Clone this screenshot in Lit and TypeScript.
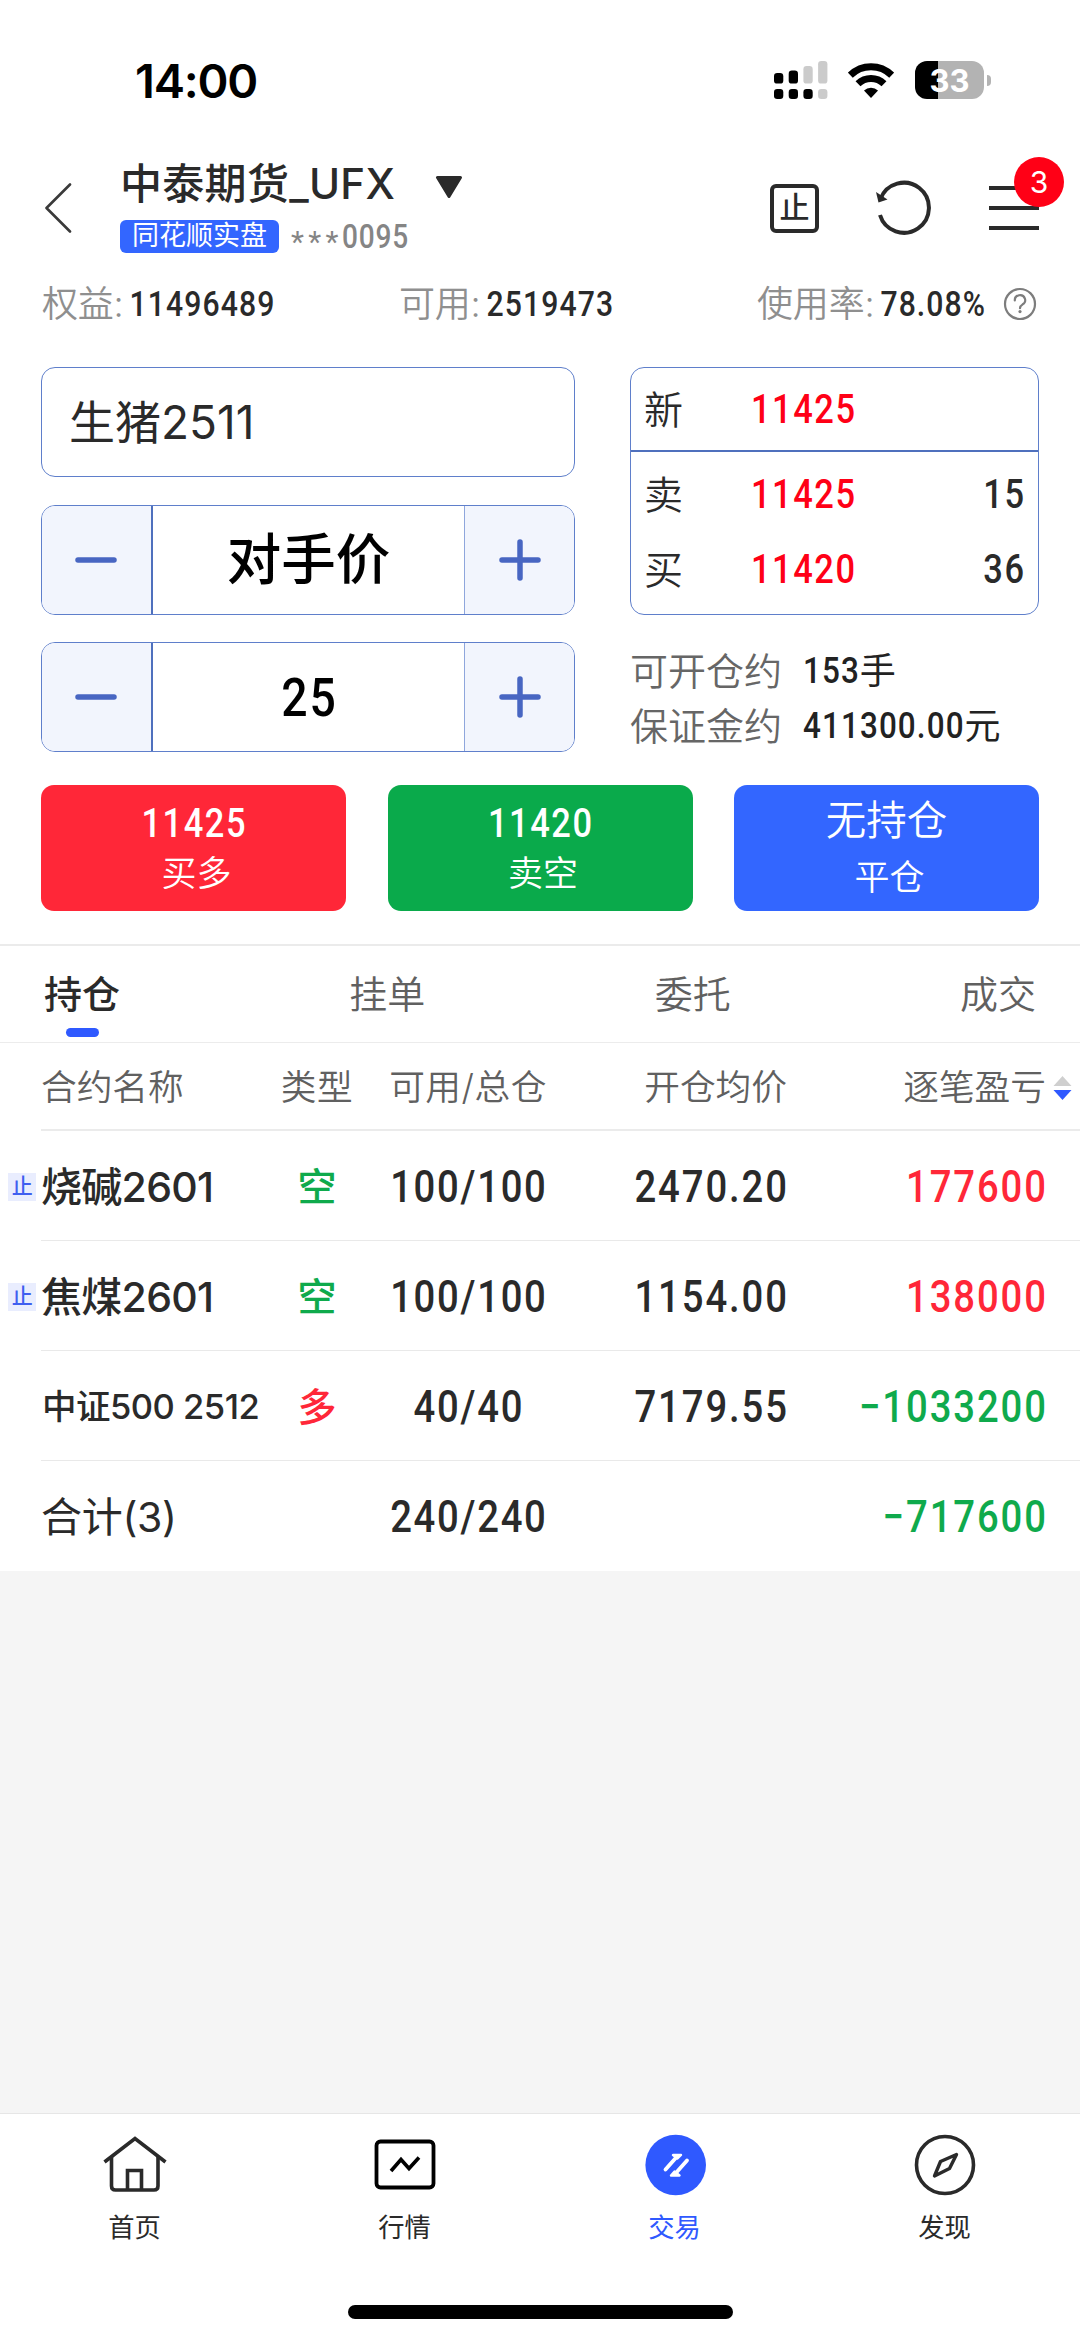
import { LitElement, html, css, svg, nothing } from "lit";
import { customElement, property } from "lit/decorators.js";
import { classMap } from "lit/directives/class-map.js";

const base = css`
  :host {
    display: block;
    font-family: Inter, "Noto Sans CJK SC", sans-serif;
    color: #2a2a2a;
  }
  * {
    box-sizing: border-box;
  }
  svg {
    display: block;
    flex: none;
  }
`;

/** Narrow numeral: set smaller, then stretched vertically to the full size. */
@customElement("num-text")
class NumText extends LitElement {
  @property() value = "";
  static styles = css`
    :host {
      display: inline-block;
      vertical-align: top;
      font-family: Roboto, "Noto Sans CJK SC", sans-serif;
      font-weight: 500;
      line-height: 1;
      white-space: nowrap;
    }
    .t {
      display: block;
      font-size: 0.85em;
      line-height: 1.1765;
      letter-spacing: var(--num-gap, 0.045em);
      margin-right: calc(-1 * var(--num-gap, 0.045em));
      transform: scaleY(1.1765);
    }
  `;
  render() {
    return html`<span class="t">${this.value}</span>`;
  }
}

@customElement("status-bar")
class StatusBar extends LitElement {
  static styles = [
    base,
    css`
      .bar {
        height: 162px;
        padding: 0 89px 0 135px;
        display: flex;
        align-items: center;
        justify-content: space-between;
      }
      .time {
        font-size: 47px;
        font-weight: 600;
        line-height: 1;
        letter-spacing: -1.2px;
        color: #000;
        margin-top: -2px;
      }
      .right {
        display: flex;
        align-items: center;
        margin-top: -2px;
      }
      .wifi {
        margin: 0 21px 0 20px;
      }
      .battery {
        display: flex;
        align-items: center;
        gap: 3px;
      }
      .cell {
        width: 69px;
        height: 38px;
        border-radius: 12px;
        background: linear-gradient(90deg, #000 23px, #b3b3b3 23px);
        color: #fff;
        font-size: 31px;
        font-weight: 700;
        line-height: 39px;
        text-align: center;
      }
      .nub {
        width: 4px;
        height: 11px;
        border-radius: 0 5px 5px 0;
        background: #b3b3b3;
      }
    `,
  ];
  render() {
    const cols = [12, 9.5, 5, 0];
    return html`<div class="bar">
      <div class="time">14:00</div>
      <div class="right">
        <svg width="54" height="38" viewBox="0 0 54 38">
          ${cols.map(
            (y, i) => svg`
              <rect x=${i * 14.7} y=${y} width="9.3" height=${22.6 - y} rx="3.2" fill=${i < 2 ? "#000" : "#cbcbcb"}></rect>
              <rect x=${i * 14.7} y="28" width="9.3" height="10" rx="3.2" fill=${i < 3 ? "#000" : "#cbcbcb"}></rect>`
          )}
        </svg>
        <svg class="wifi" width="46" height="35" viewBox="0 0 46 35">
          <g fill="none" stroke="#000" stroke-width="7">
            <path d="M2.3 12.2a29.5 29.5 0 0 1 41.4 0"></path>
            <path d="M10 20.8a18.6 18.6 0 0 1 26 0"></path>
          </g>
          <path d="M23 35l-7-7.4a10.3 10.3 0 0 1 14 0z" fill="#000"></path>
        </svg>
        <div class="battery"><div class="cell">33</div><div class="nub"></div></div>
      </div>
    </div>`;
  }
}

@customElement("account-header")
class AccountHeader extends LitElement {
  static styles = [
    base,
    css`
      .head {
        height: 92px;
        padding: 0 41px 0 44px;
        display: flex;
        align-items: center;
      }
      .who {
        margin-left: 48px;
        display: flex;
        flex-direction: column;
        gap: 12px;
      }
      .title {
        display: flex;
        align-items: center;
        height: 44px;
        margin-top: -3px;
        padding-bottom: 3px;
        font-size: 42px;
        font-weight: 500;
        line-height: 44px;
        letter-spacing: 0.300px;
      }
      .title svg {
        margin: 5px 0 0 40px;
      }
      .sub {
        display: flex;
        align-items: center;
        height: 33px;
        margin-bottom: -3px;
        gap: 12px;
      }
      .tag {
        width: 159px;
        height: 33px;
        border-radius: 6px;
        background: #3366ff;
        color: #fff;
        font-size: 27px;
        line-height: 32px;
        text-align: center;
      }
      .acct {
        display: flex;
        align-items: center;
        color: #858585;
      }
      .mask {
        font-family: Roboto, sans-serif;
        font-size: 30px;
        line-height: 33px;
        letter-spacing: 4.300px;
        padding-top: 5px;
        height: 33px;
        width: 51px;
      }
      .acct num-text {
        font-size: 33px;
        --num-gap: 0.030em;
      }
      .icons {
        margin-left: auto;
        display: flex;
        align-items: center;
      }
      .stop {
        width: 49px;
        height: 49px;
        border: 4px solid #2a2a2a;
        border-radius: 6px;
        font-size: 30px;
        line-height: 39px;
        text-align: center;
        font-weight: 500;
      }
      .redo {
        margin: 0 58px 0 56px;
      }
      .menu {
        position: relative;
      }
      .badge {
        position: absolute;
        left: 25px;
        top: -26px;
        width: 50px;
        height: 50px;
        border-radius: 50%;
        background: #ff0016;
        color: #fff;
        font-size: 30px;
        line-height: 51px;
        text-align: center;
      }
    `,
  ];
  render() {
    return html`<div class="head">
      <svg width="28" height="50" viewBox="0 0 28 50">
        <path d="M26 1.5L2.5 25 26 48.5" fill="none" stroke="#3a3a3a" stroke-width="2.6" stroke-linecap="round" stroke-linejoin="round"></path>
      </svg>
      <div class="who">
        <div class="title">
          <span>中泰期货_UFX</span>
          <svg width="28" height="22" viewBox="0 0 28 22">
            <path d="M2.5 1.5h23L14 20.5z" fill="#2a2a2a" stroke="#2a2a2a" stroke-width="3" stroke-linejoin="round"></path>
          </svg>
        </div>
        <div class="sub">
          <span class="tag">同花顺实盘</span>
          <span class="acct"><span class="mask">***</span><num-text value="0095"></num-text></span>
        </div>
      </div>
      <div class="icons">
        <div class="stop">止</div>
        <svg class="redo" width="56" height="56" viewBox="0 0 56 56">
          <path d="M5 19A25 25 0 1 1 4.5 35" fill="none" stroke="#2a2a2a" stroke-width="4" transform="translate(.5 0)"></path>
          <path d="M1 12l11.5 7.5L3.5 22.5z" fill="#2a2a2a"></path>
        </svg>
        <div class="menu">
          <svg width="50" height="50" viewBox="0 0 50 50">
            <path d="M0 5h50M0 25h50M0 45h50" stroke="#2a2a2a" stroke-width="4"></path>
          </svg>
          <span class="badge">3</span>
        </div>
      </div>
    </div>`;
  }
}

@customElement("fund-stats")
class FundStats extends LitElement {
  static styles = [
    base,
    css`
      .stats {
        height: 100px;
        padding: 0 43px 0 42px;
        display: grid;
        grid-template-columns: 357px 1fr auto;
        align-items: center;
      }
      .stat {
        display: flex;
        align-items: center;
        line-height: 1;
      }
      .label {
        font-size: 36px;
        font-weight: 350;
        color: #8f8f8f;
        margin-right: 6px;
        letter-spacing: -0.2px;
      }
      .n {
        font-size: 35.500px;
        --num-gap: 0.036em;
      }
      .stat svg {
        margin-left: 18px;
      }
    `,
  ];
  render() {
    return html`<div class="stats">
      <div class="stat"><span class="label">权益:</span><num-text class="n" value="11496489"></num-text></div>
      <div class="stat"><span class="label">可用:</span><num-text class="n" value="2519473"></num-text></div>
      <div class="stat">
        <span class="label">使用率:</span><num-text class="n" value="78.08%"></num-text>
        <svg width="34" height="34" viewBox="0 0 34 34" fill="none" stroke="#7d7d7d" stroke-width="2.2">
          <circle cx="17" cy="17" r="15"></circle>
          <path d="M11.8 13.4a5.2 5 0 1 1 7.6 4.2c-1.700 1-2.400 1.800-2.400 3.600" stroke-linecap="round"></path>
          <circle cx="17" cy="24.600" r="1.600" fill="#7d7d7d" stroke="none"></circle>
        </svg>
      </div>
    </div>`;
  }
}

@customElement("step-field")
class StepField extends LitElement {
  @property() value = "";
  @property({ type: Boolean }) numeric = false;
  static styles = [
    base,
    css`
      .box {
        height: 110px;
        border: 1.5px solid #5f7fcb;
        border-radius: 14px;
        display: grid;
        grid-template-columns: 111px 1fr 110px;
        overflow: hidden;
      }
      .btn {
        background: #f2f5fd;
        display: grid;
        place-items: center;
      }
      .minus {
        border-right: 2px solid #4f70bd;
        padding-right: 2px;
      }
      .plus {
        border-left: 1px solid #8fa6dc;
      }
      .val {
        display: grid;
        place-items: center;
        color: #000;
        font-size: 54.500px;
        font-weight: 500;
        line-height: 1;
      }
    `,
  ];
  render() {
    return html`<div class="box">
      <div class="btn minus">
        <svg width="42" height="42" viewBox="0 0 42 42"><path d="M3 21h36" stroke="#4866c2" stroke-width="5.500" stroke-linecap="round"></path></svg>
      </div>
      <div class="val">${this.numeric ? html`<num-text value=${this.value}></num-text>` : html`<span>${this.value}</span>`}</div>
      <div class="btn plus">
        <svg width="42" height="42" viewBox="0 0 42 42"><path d="M3 21h36M21 3v36" stroke="#4866c2" stroke-width="5.500" stroke-linecap="round"></path></svg>
      </div>
    </div>`;
  }
}

@customElement("order-form")
class OrderForm extends LitElement {
  static styles = [
    base,
    css`
      .form {
        padding: 13px 41px 32px;
        display: grid;
        grid-template-columns: 534px 409px;
        justify-content: space-between;
      }
      .left {
        display: flex;
        flex-direction: column;
        gap: 27.500px;
      }
      .contract {
        height: 110px;
        border: 1.5px solid #5f7fcb;
        border-radius: 14px;
        padding-left: 27px;
        font-size: 46px;
        font-weight: 400;
        line-height: 108px;
      }
      .quotes {
        height: 248px;
        border: 1.5px solid #5f7fcb;
        border-radius: 14px;
      }
      .q {
        display: grid;
        grid-template-columns: 107px 1fr auto;
        align-items: center;
        padding: 0 14px 0 13px;
        height: 75px;
        font-size: 39px;
        font-weight: 350;
        line-height: 1;
      }
      .last {
        height: 84px;
        border-bottom: 2px solid #4f70bd;
        margin-bottom: 5px;
      }
      .q num-text {
        font-size: 40.500px;
      }
      .px {
        color: #ff0016;
      }
      .est {
        display: flex;
        align-items: center;
        height: 55px;
        font-size: 38px;
        font-weight: 350;
        line-height: 1;
        color: #666;
      }
      .ests {
        padding-top: 28px;
      }
      .est num-text {
        font-size: 37px;
        color: #222;
        margin-left: 21px;
        --num-gap: 0.035em;
      }
      .unit {
        font-size: 36px;
        font-weight: 400;
        color: #222;
        margin-left: 1px;
      }
    `,
  ];
  render() {
    return html`<div class="form">
      <div class="left">
        <div class="contract">生猪2511</div>
        <step-field value="对手价"></step-field>
        <step-field numeric value="25"></step-field>
      </div>
      <div class="right">
        <div class="quotes">
          <div class="q last"><span>新</span><num-text class="px" value="11425"></num-text></div>
          <div class="q"><span>卖</span><num-text class="px" value="11425"></num-text><num-text value="15"></num-text></div>
          <div class="q"><span>买</span><num-text class="px" value="11420"></num-text><num-text value="36"></num-text></div>
        </div>
        <div class="ests">
          <div class="est">可开仓约<num-text value="153"></num-text><span class="unit">手</span></div>
          <div class="est">保证金约<num-text value="411300.00"></num-text><span class="unit">元</span></div>
        </div>
      </div>
    </div>`;
  }
}

@customElement("trade-buttons")
class TradeButtons extends LitElement {
  static styles = [
    base,
    css`
      .row {
        display: grid;
        grid-template-columns: repeat(3, 305px);
        justify-content: space-between;
        padding: 0 41px 33px;
      }
      .b {
        height: 126px;
        border-radius: 13px;
        color: #fff;
        display: flex;
        flex-direction: column;
        align-items: center;
        padding-top: 18px;
        line-height: 1;
      }
      .buy {
        background: #ff2738;
      }
      .sell {
        background: #0aaa4b;
      }
      .close {
        background: #3366ff;
        padding-top: 16px;
      }
      num-text {
        font-size: 40.500px;
      }
      .cap {
        font-size: 35px;
        font-weight: 350;
        margin-top: 12.500px;
        padding-left: 6px;
      }
      .none {
        font-size: 40.500px;
        font-weight: 350;
      }
      .close .cap {
        margin-top: 18px;
      }
    `,
  ];
  render() {
    return html`<div class="row">
      <div class="b buy"><num-text value="11425"></num-text><span class="cap">买多</span></div>
      <div class="b sell"><num-text value="11420"></num-text><span class="cap">卖空</span></div>
      <div class="b close"><span class="none">无持仓</span><span class="cap">平仓</span></div>
    </div>`;
  }
}

interface Position {
  name: string;
  small?: boolean;
  total?: boolean;
  stop?: boolean;
  side?: "空" | "多";
  qty: string;
  price?: string;
  pnl: string;
}

const POSITIONS: Position[] = [
  { name: "烧碱2601", stop: true, side: "空", qty: "100/100", price: "2470.20", pnl: "177600" },
  { name: "焦煤2601", stop: true, side: "空", qty: "100/100", price: "1154.00", pnl: "138000" },
  { name: "中证500 2512", small: true, side: "多", qty: "40/40", price: "7179.55", pnl: "−1033200" },
  { name: "合计(3)", total: true, qty: "240/240", pnl: "−717600" },
];

@customElement("position-table")
class PositionTable extends LitElement {
  static styles = [
    base,
    css`
      .tabs {
        border-top: 2px solid #ebebeb;
        border-bottom: 1px solid #ececec;
        height: 99px;
        padding: 0 44px;
        display: flex;
        justify-content: space-between;
      }
      .tab {
        display: flex;
        flex-direction: column;
        align-items: center;
        font-size: 38px;
        font-weight: 350;
        line-height: 40px;
        padding-top: 28px;
        color: #606060;
      }
      .tab.on {
        color: #2a2a2a;
        font-weight: 500;
      }
      .ind {
        width: 33px;
        height: 9px;
        border-radius: 4.500px;
        background: #2f59ff;
        margin-top: 14px;
      }
      .r {
        margin-left: 41px;
        height: 110px;
        display: grid;
        grid-template-columns: 242px 68px 234px 202px 259px 1fr;
        align-items: center;
        border-bottom: 1px solid #e9e9e9;
        padding-top: 3px;
        line-height: 1;
        white-space: nowrap;
      }
      .r.h {
        height: 88px;
        border-bottom: 2px solid #ebebeb;
        font-size: 35.700px;
        font-weight: 350;
        color: #606060;
      }
      .h .c {
        display: flex;
        justify-content: center;
        letter-spacing: 0.500px;
      }
      .r.total {
        border-bottom: 0;
      }
      .name {
        position: relative;
        font-size: 41px;
        font-weight: 500;
        letter-spacing: -0.700px;
      }
      .name.small {
        font-size: 34.500px;
        letter-spacing: -0.500px;
        padding-left: 1px;
      }
      .total .name {
        font-weight: 400;
        letter-spacing: -0.300px;
      }
      .mark {
        position: absolute;
        left: -33px;
        top: 6px;
        width: 28px;
        height: 28px;
        background: #e9edfe;
        color: #3f5ff0;
        font-size: 21px;
        line-height: 26px;
        text-align: center;
      }
      .c {
        text-align: center;
      }
      .e {
        text-align: right;
      }
      .side {
        font-size: 39px;
        font-weight: 500;
        padding-bottom: 2px;
      }
      num-text {
        font-size: 45px;
        --num-gap: 0.045em;
      }
      .e num-text {
        --num-gap: 0.050em;
      }
      .up {
        color: #ff2738;
      }
      .down {
        color: #0faa4c;
      }
      .sort {
        margin-left: 7px;
      }
    `,
  ];
  render() {
    return html`
      <div class="tabs">
        ${["持仓", "挂单", "委托", "成交"].map(
          (t, i) => html`<div class=${classMap({ tab: true, on: i === 0 })}>${t}${i === 0 ? html`<span class="ind"></span>` : nothing}</div>`
        )}
      </div>
      <div class="r h">
        <span>合约名称</span><span class="c">类型</span><span class="c">可用/总仓</span><span class="e">开仓均价</span><span class="e">逐笔盈亏</span>
        <svg class="sort" width="19" height="26" viewBox="0 0 19 26">
          <path d="M9.500 1L18.500 11H.5z" fill="#cfcfcf"></path>
          <path d="M9.500 25L18.500 15H.5z" fill="#2f59ff"></path>
        </svg>
      </div>
      ${POSITIONS.map((p) => {
        const down = p.pnl.startsWith("−");
        return html`<div class=${classMap({ r: true, total: !!p.total })}>
          <span class=${classMap({ name: true, small: !!p.small })}>${p.stop ? html`<span class="mark">止</span>` : nothing}${p.name}</span>
          <span class=${classMap({ side: true, c: true, up: p.side === "多", down: p.side === "空" })}>${p.side ?? nothing}</span>
          <span class="c"><num-text value=${p.qty}></num-text></span>
          <span class="e">${p.price ? html`<num-text value=${p.price}></num-text>` : nothing}</span>
          <span class=${classMap({ e: true, up: !down, down })}><num-text value=${p.pnl}></num-text></span>
        </div>`;
      })}
    `;
  }
}

@customElement("tab-bar")
class TabBar extends LitElement {
  static styles = [
    base,
    css`
      .wrap {
        height: 228px;
        border-top: 1px solid #e6e6e6;
        background: #fff;
        display: flex;
        flex-direction: column;
        align-items: center;
        justify-content: space-between;
        padding-bottom: 22px;
      }
      .nav {
        display: grid;
        grid-template-columns: repeat(4, 270px);
        padding-top: 20px;
      }
      .item {
        display: flex;
        flex-direction: column;
        align-items: center;
        gap: 18px;
        font-size: 26.300px;
        line-height: 28px;
      }
      .item span {
        padding-right: 1px;
      }
      .item.on {
        color: #2f59ff;
      }
      .home {
        width: 385px;
        height: 14px;
        border-radius: 7px;
        background: #000;
      }
    `,
  ];
  render() {
    const house = html`<svg width="64" height="62" viewBox="0 0 64 62" fill="none" stroke="#2a2a2a" stroke-width="3.600">
      <path d="M1.500 28L32 4.500 62.500 28"></path>
      <path d="M8.500 23v29q0 4 4 4h38.500q4 0 4-4V23"></path>
      <path d="M24.500 56V36.500h14V56"></path>
    </svg>`;
    const chart = html`<svg width="64" height="62" viewBox="0 0 64 62" fill="none" stroke="#000">
      <rect x="3.500" y="7.500" width="57" height="46" rx="4" stroke-width="3.800"></rect>
      <path d="M18 37L28 25.500l8 9L46 23.500" stroke-width="3.600"></path>
    </svg>`;
    const trade = html`<svg width="64" height="62" viewBox="0 0 64 62" fill="none" stroke="#fff" stroke-linecap="round" stroke-linejoin="round">
      <circle cx="32.700" cy="31" r="30.300" fill="#2f59ff" stroke="none"></circle>
      <path d="M22.500 35.500L34.500 22" stroke-width="3.800"></path>
      <path d="M30 21h8l-3.500 3.500z" stroke-width="2.400" fill="#fff"></path>
      <path d="M44 26.500L32 40" stroke-width="3.800"></path>
      <path d="M36.500 41.500h-8.500l3.500-4z" stroke-width="2.400" fill="#fff"></path>
    </svg>`;
    const compass = html`<svg width="64" height="62" viewBox="0 0 64 62" fill="none" stroke="#2a2a2a" stroke-linejoin="round">
      <circle cx="32" cy="31" r="28.500" stroke-width="3.600"></circle>
      <path d="M43.500 20.500L27.500 27.500 21.500 42l15-7.500z" stroke-width="3.400"></path>
    </svg>`;
    const items: [unknown, string][] = [[house, "首页"], [chart, "行情"], [trade, "交易"], [compass, "发现"]];
    return html`<div class="wrap">
      <div class="nav">
        ${items.map(([icon, label], i) => html`<div class=${classMap({ item: true, on: i === 2 })}>${icon}<span>${label}</span></div>`)}
      </div>
      <div class="home"></div>
    </div>`;
  }
}

@customElement("app-root")
class AppRoot extends LitElement {
  static styles = [
    base,
    css`
      .page {
        width: 1080px;
        height: 2341px;
        display: flex;
        flex-direction: column;
        background: #f5f5f5;
        overflow: hidden;
      }
      .top {
        background: #fff;
        height: 1571px;
        flex: none;
      }
      .fill {
        flex: 1;
      }
    `,
  ];
  render() {
    return html`<div class="page">
      <div class="top">
        <status-bar></status-bar>
        <account-header></account-header>
        <fund-stats></fund-stats>
        <order-form></order-form>
        <trade-buttons></trade-buttons>
        <position-table></position-table>
      </div>
      <div class="fill"></div>
      <tab-bar></tab-bar>
    </div>`;
  }
}
